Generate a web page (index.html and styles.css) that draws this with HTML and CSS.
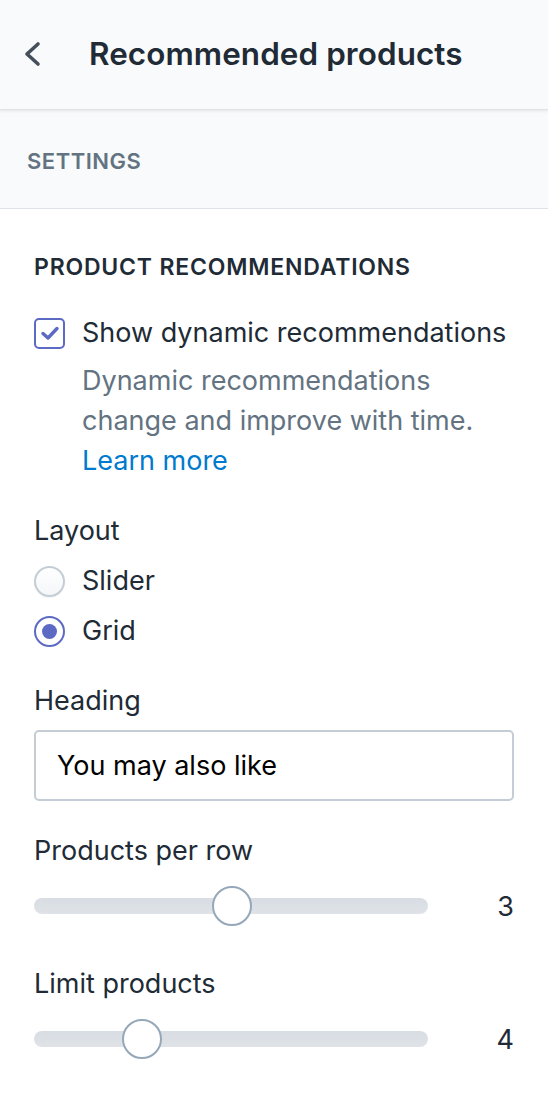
FILE: index.html
```html
<!DOCTYPE html>
<html lang="en">
<head>
<meta charset="utf-8">
<title>Recommended products</title>
<link rel="stylesheet" href="styles.css">
</head>
<body>
<header class="topbar">
  <button class="back" aria-label="Back">
    <svg width="20" height="28" viewBox="0 0 20 28"><path d="M16 4 L5 14 L16 24" fill="none" stroke="#454f5b" stroke-width="3.6" stroke-linecap="round" stroke-linejoin="round"/></svg>
  </button>
  <h1 class="title">Recommended products</h1>
</header>
<div class="section-head">SETTINGS</div>
<main class="content">
  <h2 class="subheading">PRODUCT RECOMMENDATIONS</h2>
  <label class="check-row">
    <span class="checkbox">
      <svg width="20" height="16" viewBox="0 0 20 16"><path d="M3 8.5 L8 13 L17 3.5" fill="none" stroke="#5c6ac4" stroke-width="3.4" stroke-linecap="round" stroke-linejoin="round"/></svg>
    </span>
    <span class="check-label">Show dynamic recommendations</span>
  </label>
  <p class="help">Dynamic recommendations change and improve with time. <a href="#" class="link">Learn more</a></p>

  <div class="field">
    <div class="label">Layout</div>
    <div class="radios">
      <label class="radio-row"><span class="radio"></span><span>Slider</span></label>
      <label class="radio-row"><span class="radio checked"><span class="dot"></span></span><span>Grid</span></label>
    </div>
  </div>

  <div class="field">
    <div class="label">Heading</div>
    <div class="input">You may also like</div>
  </div>

  <div class="field">
    <div class="label">Products per row</div>
    <div class="range-row">
      <div class="track"><span class="thumb" style="left: 178px"></span></div>
      <span class="value">3</span>
    </div>
  </div>

  <div class="field range-field">
    <div class="label">Limit products</div>
    <div class="range-row">
      <div class="track"><span class="thumb" style="left: 88px"></span></div>
      <span class="value">4</span>
    </div>
  </div>
</main>
</body>
</html>
```
FILE: styles.css
```css
* { box-sizing: border-box; }
html, body {
  margin: 0;
  padding: 0;
  background: #ffffff;
  font-family: Inter, "Noto Sans", "Liberation Sans", sans-serif;
  color: #212b36;
}
.topbar {
  height: 110px;
  background: #f9fafb;
  border-bottom: 1px solid #dfe3e8;
  box-shadow: 0 1px 3px rgba(63, 63, 68, 0.12);
  display: flex;
  align-items: center;
  padding: 0 0 2px 22px;
  position: relative;
  z-index: 1;
}
.back {
  border: 0;
  background: none;
  padding: 0;
  width: 20px;
  height: 28px;
  display: flex;
  margin-right: 47px;
}
.title {
  margin: 0;
  font-size: 31.4px;
  font-weight: 600;
  letter-spacing: 0.1px;
  color: #212b36;
}
.section-head {
  height: 99px;
  background: #f9fafb;
  border-bottom: 1px solid #dfe3e8;
  display: flex;
  align-items: center;
  padding: 4px 27px 0;
  font-size: 22px;
  font-weight: 600;
  letter-spacing: 0.5px;
  color: #637381;
}
.content {
  padding: 42px 34px 40px;
  display: flex;
  flex-direction: column;
}
.subheading {
  margin: 0;
  font-size: 23px;
  line-height: 32px;
  font-weight: 600;
  letter-spacing: 0.8px;
  color: #212b36;
}
.check-row {
  display: flex;
  align-items: center;
  gap: 17px;
  margin-top: 30px;
  font-size: 27px;
  line-height: 40px;
}
.checkbox {
  width: 31px;
  height: 31px;
  border: 2px solid #5c6ac4;
  border-radius: 5px;
  background: #ffffff;
  display: flex;
  align-items: center;
  justify-content: center;
  flex: none;
}
.help {
  margin: 8px 0 0 48px;
  font-size: 27px;
  line-height: 40px;
  color: #637381;
}
.link {
  color: #007ace;
  text-decoration: none;
}
.field {
  margin-top: 30px;
  display: flex;
  flex-direction: column;
}
.label {
  font-size: 27px;
  line-height: 40px;
  color: #212b36;
}
.radios {
  display: flex;
  flex-direction: column;
  gap: 10px;
  margin-top: 10px;
}
.radio-row {
  display: flex;
  align-items: center;
  gap: 17px;
  font-size: 27px;
  line-height: 40px;
}
.radio {
  width: 31px;
  height: 31px;
  border-radius: 50%;
  border: 2px solid #c4cdd5;
  background: linear-gradient(#ffffff, #f4f6f8);
  box-shadow: 0 1px 1px rgba(22, 29, 37, 0.06);
  display: flex;
  align-items: center;
  justify-content: center;
  flex: none;
}
.radio.checked {
  border-color: #5c6ac4;
  background: #ffffff;
  box-shadow: none;
}
.dot {
  width: 15px;
  height: 15px;
  border-radius: 50%;
  background: #5c6ac4;
}
.input {
  margin-top: 9px;
  height: 71px;
  border: 2px solid #c4cdd5;
  border-radius: 5px;
  padding: 0 21px;
  display: flex;
  align-items: center;
  font-size: 27px;
  color: #000000;
}
.range-row {
  margin-top: 15px;
  height: 40px;
  display: flex;
  align-items: center;
}
.range-field { margin-top: 38px; }
.track {
  width: 394px;
  height: 16px;
  border-radius: 8px;
  background: linear-gradient(#d8dde3, #dfe3e8);
  position: relative;
}
.thumb {
  position: absolute;
  top: -12px;
  width: 40px;
  height: 40px;
  border-radius: 50%;
  border: 2px solid #95a7b8;
  background: #ffffff;
}
.value {
  margin-left: auto;
  font-size: 27px;
  color: #212b36;
}
```
